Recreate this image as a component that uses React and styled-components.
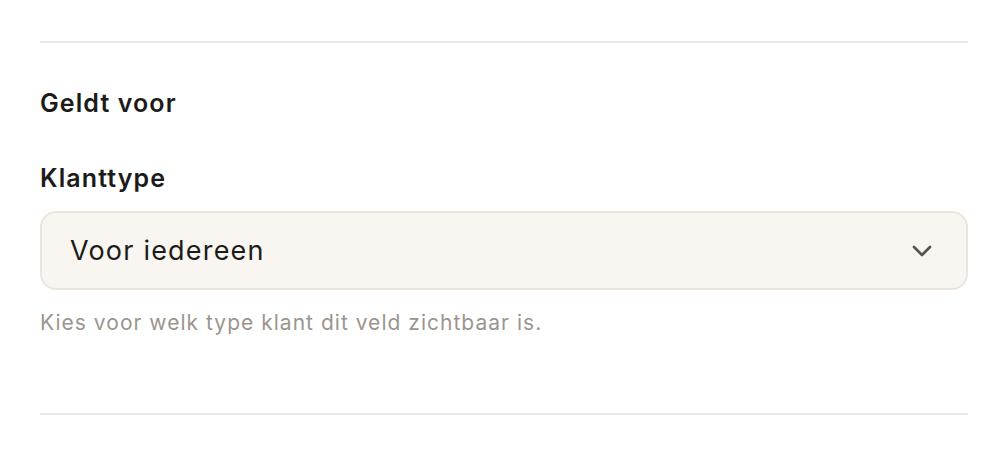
import styled, { createGlobalStyle } from 'styled-components';

const GlobalStyle = createGlobalStyle`
    body {
        margin: 0;
        background: #ffffff;
        font-family: Inter, "Noto Sans", sans-serif;
        color: #1c1b1a;
    }
`;

const Page = styled.div`
    padding: 41px 40px 0 40px;
`;

const Section = styled.section`
    border-top: 2px solid #eeebe7;
    border-bottom: 2px solid #eeebe7;
    padding: 44px 0 76px 0;
`;

const Heading = styled.h2`
    margin: 0;
    font-size: 25px;
    line-height: 32px;
    font-weight: 600;
    letter-spacing: 1.1px;
`;

const Field = styled.div`
    margin-top: 43px;
    display: flex;
    flex-direction: column;
`;

const Label = styled.label`
    font-size: 25px;
    line-height: 32px;
    font-weight: 600;
    letter-spacing: 1.1px;
    margin-bottom: 17px;
`;

const SelectBox = styled.div`
    height: 75px;
    box-sizing: content-box;
    border: 2px solid #ebe5dd;
    border-radius: 16px;
    background: #f9f6f1;
    display: flex;
    align-items: center;
    justify-content: space-between;
    padding: 0 28px 0 28px;
`;

const SelectValue = styled.span`
    font-size: 27px;
    letter-spacing: 1.2px;
    color: #1c1b1a;
`;

const Help = styled.p`
    margin: 19px 0 0 0;
    font-size: 21px;
    line-height: 28px;
    letter-spacing: 1.02px;
    color: #9b958e;
`;

const Chevron = () => (
    <svg width="32" height="32" viewBox="0 0 24 24" fill="none" stroke="#57534e" strokeWidth="2" strokeLinecap="round" strokeLinejoin="round">
        <path d="M6 9l6 6 6-6" />
    </svg>
);

const App = () => {
    return (
        <Page>
            <GlobalStyle />
            <Section>
                <Heading>Geldt voor</Heading>
                <Field>
                    <Label>Klanttype</Label>
                    <SelectBox>
                        <SelectValue>Voor iedereen</SelectValue>
                        <Chevron />
                    </SelectBox>
                    <Help>Kies voor welk type klant dit veld zichtbaar is.</Help>
                </Field>
            </Section>
        </Page>
    );
};

export default App;
